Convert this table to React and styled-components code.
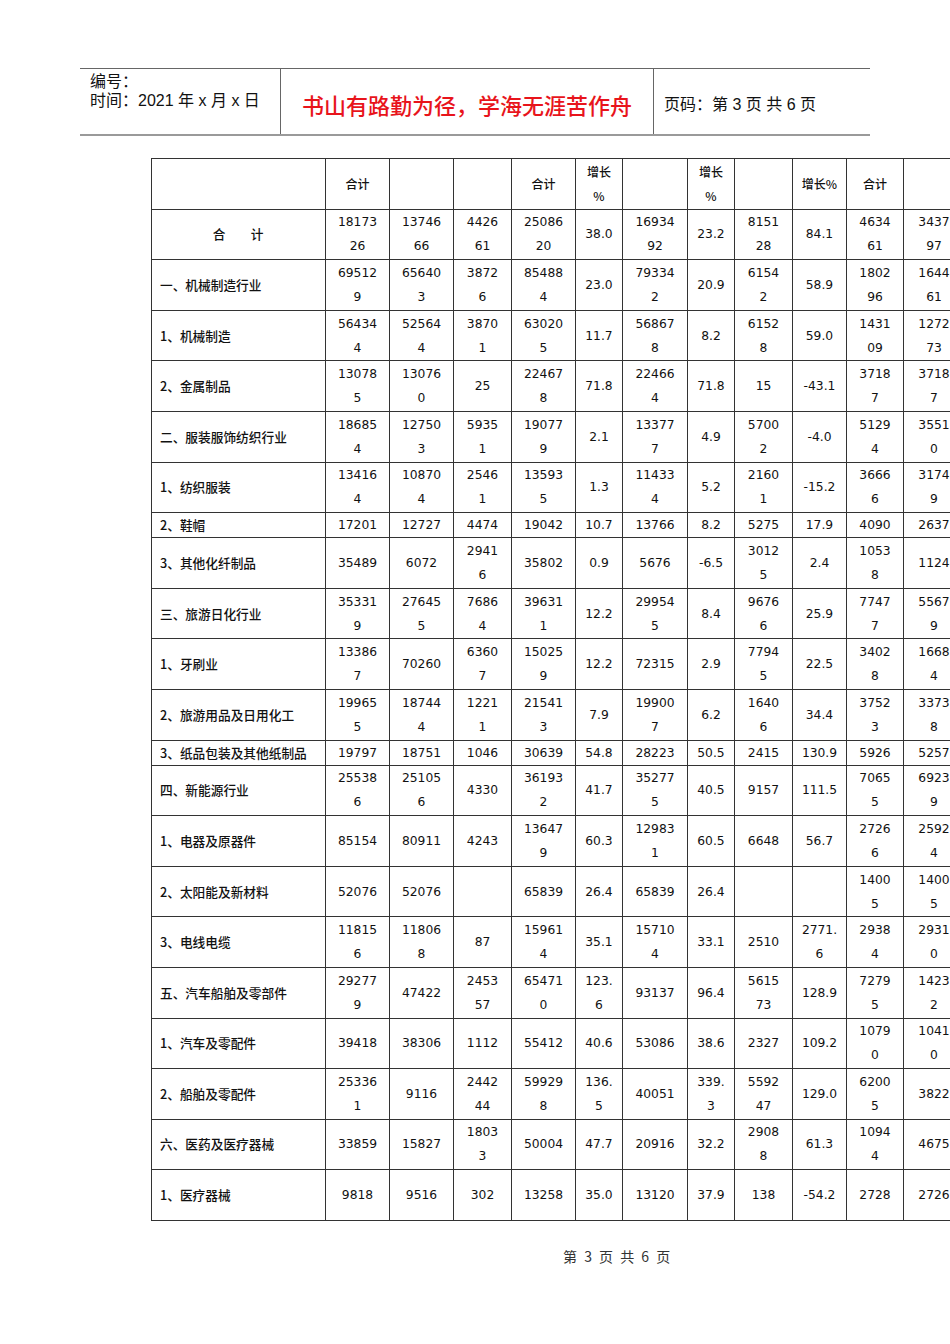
import React from "react";
import styled, { createGlobalStyle } from "styled-components";

const GlobalStyle = createGlobalStyle`
  html, body {
    margin: 0;
    padding: 0;
    background: #fff;
  }
  body {
    overflow-x: hidden;
    font-family: "Liberation Sans", "Noto Sans CJK SC", sans-serif;
  }
`;

const Page = styled.div`
  width: 950px;
  overflow: hidden;
  padding-bottom: 60px;
`;

const Header = styled.div`
  margin: 68px 0 0 80px;
  width: 790px;
  height: 65px;
  display: grid;
  grid-template-columns: 201px 373px 216px;
  border-top: 1px solid #666;
  border-bottom: 2px solid #9a9a9a;
  color: #111;
  font-size: 16px;
`;

const InfoCell = styled.div`
  padding: 3px 0 0 10px;
  line-height: 19px;
  border-right: 1px solid #666;
`;

const Motto = styled.div`
  display: flex;
  align-items: center;
  justify-content: center;
  padding-top: 4px;
  border-right: 1px solid #666;
  color: #e8141b;
  font-family: "Noto Sans CJK SC", sans-serif;
  font-size: 22px;
  font-weight: 500;
`;

const PageNo = styled.div`
  display: flex;
  align-items: center;
  padding: 2px 0 0 10px;
`;

const Table = styled.table`
  margin: 22px 0 0 151px;
  border-collapse: collapse;
  table-layout: fixed;
  width: 813px;
  color: #111;
`;

const Row = styled.tr`
  height: ${(p) => (p.$single ? "25px" : "50.6px")};
`;

const Cell = styled.td`
  border: 1px solid #333;
  padding: 0 1px;
  text-align: center;
  vertical-align: middle;
  font-family: "DejaVu Sans", "Noto Sans CJK SC", sans-serif;
  font-size: 12.3px;
  line-height: 24px;
  white-space: nowrap;
`;

const LabelCell = styled(Cell)`
  text-align: ${(p) => (p.$center ? "center" : "left")};
  padding-left: ${(p) => (p.$center ? "0" : "8px")};
  font-family: "Noto Sans CJK SC", sans-serif;
  font-size: 12.7px;
  font-weight: 500;
`;

const HeadCell = styled(Cell)`
  font-family: "Noto Sans CJK SC", sans-serif;
  font-size: 12px;
  font-weight: 500;
`;

const Footer = styled.div`
  margin-top: 25px;
  padding-left: 563px;
  font-family: "Noto Sans CJK SC", sans-serif;
  font-size: 14px;
  letter-spacing: 2px;
  line-height: 20px;
  color: #333;
`;

const widths = [174, 64, 64, 58, 64, 47, 65, 47, 58, 54, 57, 61];

const heads = ["", "合计", "", "", "合计", "增长|%", "", "增长|%", "", "增长%", "合计", ""];

const rows = [
  ["合　　计", "18173|26", "13746|66", "4426|61", "25086|20", "38.0", "16934|92", "23.2", "8151|28", "84.1", "4634|61", "3437|97"],
  ["一、机械制造行业", "69512|9", "65640|3", "3872|6", "85488|4", "23.0", "79334|2", "20.9", "6154|2", "58.9", "1802|96", "1644|61"],
  ["1、机械制造", "56434|4", "52564|4", "3870|1", "63020|5", "11.7", "56867|8", "8.2", "6152|8", "59.0", "1431|09", "1272|73"],
  ["2、金属制品", "13078|5", "13076|0", "25", "22467|8", "71.8", "22466|4", "71.8", "15", "-43.1", "3718|7", "3718|7"],
  ["二、服装服饰纺织行业", "18685|4", "12750|3", "5935|1", "19077|9", "2.1", "13377|7", "4.9", "5700|2", "-4.0", "5129|4", "3551|0"],
  ["1、纺织服装", "13416|4", "10870|4", "2546|1", "13593|5", "1.3", "11433|4", "5.2", "2160|1", "-15.2", "3666|6", "3174|9"],
  ["2、鞋帽", "17201", "12727", "4474", "19042", "10.7", "13766", "8.2", "5275", "17.9", "4090", "2637"],
  ["3、其他化纤制品", "35489", "6072", "2941|6", "35802", "0.9", "5676", "-6.5", "3012|5", "2.4", "1053|8", "1124"],
  ["三、旅游日化行业", "35331|9", "27645|5", "7686|4", "39631|1", "12.2", "29954|5", "8.4", "9676|6", "25.9", "7747|7", "5567|9"],
  ["1、牙刷业", "13386|7", "70260", "6360|7", "15025|9", "12.2", "72315", "2.9", "7794|5", "22.5", "3402|8", "1668|4"],
  ["2、旅游用品及日用化工", "19965|5", "18744|4", "1221|1", "21541|3", "7.9", "19900|7", "6.2", "1640|6", "34.4", "3752|3", "3373|8"],
  ["3、纸品包装及其他纸制品", "19797", "18751", "1046", "30639", "54.8", "28223", "50.5", "2415", "130.9", "5926", "5257"],
  ["四、新能源行业", "25538|6", "25105|6", "4330", "36193|2", "41.7", "35277|5", "40.5", "9157", "111.5", "7065|5", "6923|9"],
  ["1、电器及原器件", "85154", "80911", "4243", "13647|9", "60.3", "12983|1", "60.5", "6648", "56.7", "2726|6", "2592|4"],
  ["2、太阳能及新材料", "52076", "52076", "", "65839", "26.4", "65839", "26.4", "", "", "1400|5", "1400|5"],
  ["3、电线电缆", "11815|6", "11806|8", "87", "15961|4", "35.1", "15710|4", "33.1", "2510", "2771.|6", "2938|4", "2931|0"],
  ["五、汽车船舶及零部件", "29277|9", "47422", "2453|57", "65471|0", "123.|6", "93137", "96.4", "5615|73", "128.9", "7279|5", "1423|2"],
  ["1、汽车及零配件", "39418", "38306", "1112", "55412", "40.6", "53086", "38.6", "2327", "109.2", "1079|0", "1041|0"],
  ["2、船舶及零配件", "25336|1", "9116", "2442|44", "59929|8", "136.|5", "40051", "339.|3", "5592|47", "129.0", "6200|5", "3822"],
  ["六、医药及医疗器械", "33859", "15827", "1803|3", "50004", "47.7", "20916", "32.2", "2908|8", "61.3", "1094|4", "4675"],
  ["1、医疗器械", "9818", "9516", "302", "13258", "35.0", "13120", "37.9", "138", "-54.2", "2728", "2726"],
];

const singleRows = ["2、鞋帽", "3、纸品包装及其他纸制品"];

const Lines = ({ text }) =>
  text.split("|").map((part, i) => (
    <React.Fragment key={i}>
      {i > 0 && <br />}
      {part}
    </React.Fragment>
  ));

export default function App() {
  return (
    <Page>
      <GlobalStyle />
      <Header>
        <InfoCell>
          编号：
          <br />
          时间：2021 年 x 月 x 日
        </InfoCell>
        <Motto>书山有路勤为径，学海无涯苦作舟</Motto>
        <PageNo>页码：第 3 页 共 6 页</PageNo>
      </Header>

      <Table>
        <colgroup>
          {widths.map((w, i) => (
            <col key={i} style={{ width: w }} />
          ))}
        </colgroup>
        <tbody>
          <Row>
            {heads.map((h, i) => (
              <HeadCell key={i}>
                <Lines text={h} />
              </HeadCell>
            ))}
          </Row>
          {rows.map(([label, ...values]) => (
            <Row key={label} $single={singleRows.includes(label)}>
              <LabelCell $center={label === "合　　计"}>{label}</LabelCell>
              {values.map((v, i) => (
                <Cell key={i}>
                  <Lines text={v} />
                </Cell>
              ))}
            </Row>
          ))}
        </tbody>
      </Table>

      <Footer>第 3 页 共 6 页</Footer>
    </Page>
  );
}
